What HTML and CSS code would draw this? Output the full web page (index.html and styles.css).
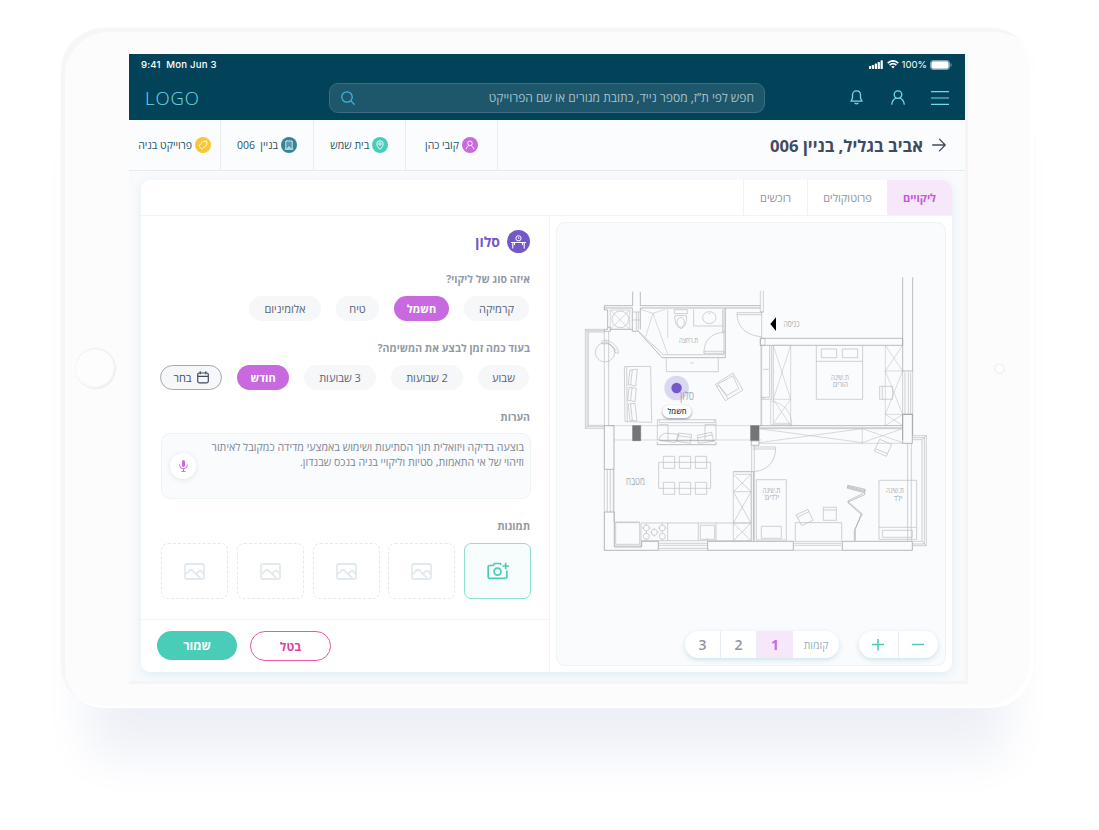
FILE: index.html
```html
<!DOCTYPE html>
<html lang="he">
<head>
<meta charset="utf-8">
<title>אביב בגליל</title>
<link rel="stylesheet" href="styles.css">
</head>
<body>
<div class="device">
  <div class="home"></div>
  <div class="screen" dir="rtl">
    <header class="top">
      <div class="status" dir="ltr">
        <span class="clock">9:41&nbsp; Mon Jun 3</span>
        <span class="signals">
          <svg width="14" height="9" viewBox="0 0 14 9" fill="#fff"><rect x="0" y="6" width="2.200" height="3" rx=".6"/><rect x="2.900" y="5" width="2.200" height="4" rx=".6"/><rect x="5.800" y="3.600" width="2.200" height="5.400" rx=".6"/><rect x="8.700" y="2" width="2.200" height="7" rx=".6"/><rect x="11.600" y=".3" width="2.200" height="8.700" rx=".6"/></svg>
          <svg width="12" height="9" viewBox="0 0 12 9" fill="none" stroke="#fff" stroke-width="1.600"><path d="M.7 3.200Q6-1.600 11.300 3.200M2.600 5.200Q6 2.100 9.400 5.200"/><path d="M4.200 6.600Q6 5.200 7.800 6.600L6 8.500Z" fill="#fff" stroke="none"/></svg>
          <span>100%</span>
          <svg width="22" height="10" viewBox="0 0 22 10"><rect x=".5" y=".5" width="19" height="9" rx="2.400" fill="none" stroke="#7f9fab"/><rect x="1.300" y="1.300" width="17.400" height="7.400" rx="1.600" fill="#fff"/><path d="M21 3.500v3" stroke="#7f9fab"/></svg>
        </span>
      </div>
      <div class="bar">
        <svg class="menu" width="18" height="14" viewBox="0 0 18 14" stroke="#70dbe5" stroke-width="1.200"><path d="M0 .6h18M0 7h18M0 13.400h18"/></svg>
        <svg class="user" width="14" height="15" viewBox="0 0 14 15" fill="none" stroke="#70dbe5" stroke-width="1.300" stroke-linecap="round"><circle cx="7" cy="4.600" r="3.800"/><path d="M.8 14.200C1 10.600 3.300 8.900 5 8M13.200 14.200C13 10.600 10.700 8.900 9 8"/></svg>
        <svg class="bell" width="13" height="15" viewBox="0 0 13 15" fill="none" stroke="#70dbe5" stroke-width="1.300" stroke-linecap="round" stroke-linejoin="round"><path d="M6.500.9C4.100.9 2.500 2.700 2.500 5V8.200L1 11.200H12L10.500 8.200V5C10.500 2.700 8.900.9 6.500.9ZM5 13.300Q6.500 14.500 8 13.300"/></svg>
        <div class="search">
          <span>חפש לפי ת”ז, מספר נייד, כתובת מגורים או שם הפרוייקט</span>
          <svg width="14" height="14" viewBox="0 0 14 14" fill="none" stroke="#43b2dc" stroke-width="1.300" stroke-linecap="round"><circle cx="6" cy="6" r="5.200"/><path d="M9.900 9.900L13.200 13.200"/></svg>
        </div>
        <div class="logo">LOGO</div>
      </div>
    </header>
    <div class="crumbs">
      <div class="title">
        <svg width="14" height="14" viewBox="0 0 14 14" fill="none" stroke="#414b5e" stroke-width="1.300" stroke-linecap="round" stroke-linejoin="round"><path d="M.7 7H13M7.500 1.100L13.200 7L7.500 12.900"/></svg>
        <h1>אביב בגליל, בניין 006</h1>
      </div>
      <div class="crumb"><i class="dot purple"><svg width="10" height="10" viewBox="0 0 10 10"><circle cx="5" cy="3.300" r="2.300"/><path d="M1.200 9.300C1.400 7.300 2.600 6.300 3.900 5.500M8.800 9.300C8.600 7.300 7.400 6.300 6.100 5.500"/></svg></i><span>קובי כהן</span></div>
      <div class="crumb"><i class="dot green"><svg width="10" height="10" viewBox="0 0 10 10"><path d="M5 9.400C3 7.400 1.800 5.800 1.800 4A3.200 3.200 0 0 1 8.200 4C8.200 5.800 7 7.400 5 9.400Z"/><circle cx="5" cy="4" r="1.200"/></svg></i><span>בית שמש</span></div>
      <div class="crumb"><i class="dot teal"><svg width="10" height="10" viewBox="0 0 10 10"><path d="M.8 9.200H9.200M1.900 9V1H8.100V9M4 9V7H6V9M3.600 3H4.400M5.600 3H6.400M3.600 5H4.400M5.600 5H6.400"/></svg></i><span>בניין &nbsp;006</span></div>
      <div class="crumb"><i class="dot yellow"><svg width="10" height="10" viewBox="0 0 10 10"><path d="M5.200 1.500L8.900 1.100L8.700 4.900L4.400 8.800Q3.900 9.200 3.400 8.700L1.300 6.300Q.9 5.800 1.300 5.300ZM7 3V3.100"/></svg></i><span>פרוייקט בניה</span></div>
    </div>
    <main class="body">
      <section class="card">
        <nav class="tabs"><span class="tab on">ליקויים</span><span class="tab protocols">פרוטוקולים</span><span class="tab goods">רוכשים</span></nav>
        <div class="cols">
          <div class="mapcol">
            <div class="map">
              <svg class="plan" width="361" height="290" viewBox="575 270 361 290" fill="none" stroke="#b9bbbe" stroke-width="2">
                <!-- bathroom, balcony and living room -->
                <g transform="translate(575 270) scale(.3333)">
                  <path d="M173 65V107H88V120H98V178H88V184H106V172H98M196 65V107H556M196 114H556M88 114H172V178H106M172 178V184H190L261 263H451V114M196 114V178" stroke="#9b9da0"/>
                  <path d="M184 178L265 254H447V118M443 118V186H451M556 62V126M565 62V126M172 126H196M184 126V178M190 126V178M172 150H196"/>
                  <path d="M106 120H164V178H106ZM106 120L164 178M164 120L106 178" stroke-width="1.500"/><circle cx="136" cy="148" r="25"/>
                  <path d="M88 178H31V475H88M88 182H36V470H88M88 186H40V466H88M88 186V467M101 186V467M31 178L40 186M31 475L40 466"/>
                  <circle cx="90" cy="247" r="29"/><path d="M79 215C92 200 132 225 130 250L120 247C120 230 105 217 82 222ZM90 211L124 242"/>
                  <path d="M196 118L234 130L271 118M234 130L212 200M234 130L278 253M278 118V204" stroke-width="1.500"/>
                  <path d="M298 119H337V131H298ZM299 138Q318 134 335 138Q336 170 318 176Q299 170 299 138Z"/><ellipse cx="317" cy="157" rx="11" ry="15"/>
                  <path d="M356 118V168H443M403 128V133"/><ellipse cx="403" cy="143" rx="20" ry="18"/>
                  <path d="M387 248C387 210 410 189 446 187M387 244H447V250H387ZM486 128H560M486 134H560M486 128C486 172 515 197 560 200"/>
                  <path d="M274 265V305H430V265M345 277L350 281L356 277"/>
                  <path d="M148 290L227 289L230 457L150 455ZM155 290L157 455M165 300L187 298L182 348L160 344ZM172 299L167 345M162 352L184 355L180 395L158 391ZM171 353L167 392M160 402L180 400L186 452L165 452ZM167 401L172 452"/>
                  <path d="M421 343L474 309L504 360L451 392ZM425 350L432 346L459 386M428 343L474 317L491 356L456 376Z"/>
                  <path d="M106 467H560M118 510H560" stroke-width="1.500"/>
                  <path d="M247 512V449H423V512M279 510V464H251M390 510V464H422M253 449V458H418V449"/>
                  <path d="M256 498Q270 486 280 490L312 493Q308 512 300 518L252 510ZM310 489L350 494L346 520L304 514ZM308 497L348 502M367 496L410 487L416 514L370 520ZM368 504L411 495"/>
                  <path d="M556 205H570V226H556ZM560 126V205M560 226V467M560 384H570"/>
                  <path d="M173 467H197V512H173ZM527 467H552V512H527Z" fill="#747578" stroke="#747578"/>
                </g>
                <!-- parents' bedroom and entrance -->
                <g transform="translate(750 270) scale(.3333)">
                  <path d="M458 22V303H488V22M458 433V510M488 433V496M458 433H488M31 205H458V226H31V205M31 126H41" stroke="#9b9da0"/>
                  <path d="M458 303V433M465 307V433M475 307V433M482 307V433M488 303V433M33 226V467M59 226V382H33M65 226V388H33M70 226V388M40 298H56"/>
                  <path d="M70 226H122V467M70 388H122M70 388V460H122M70 226L122 388M122 226L70 388M70 388L122 467M122 388L70 460M62 392V464H126Q124 405 62 392M406 226V467M406 303H458M406 433H458M406 226L458 303M458 226L406 303L458 433M458 303L406 433L458 467M458 433L406 467" stroke-width="1.500"/>
                  <path d="M199 226V388H338V226M199 274H338M214 237H260V263H214ZM277 237H323V263H277ZM428 349H389V388H428ZM397 349V388"/>
                  <path d="M27 467H458M27 474H458" stroke="#9b9da0"/>
                  <path d="M61 162L78 142V183Z" fill="#000" stroke="none"/>
                </g>
                <!-- kitchen -->
                <g transform="translate(575 410) scale(.3333)">
                  <path d="M88 47H117V178H88ZM88 306V421H250V394H200V411H118V306H88M398 421V394H510M398 421H510" stroke="#929497"/>
                  <path d="M88 178V306M97 178V306M106 178V306M115 178V306M251 400H398M251 406H398M251 415H398M251 421H398M117 178V336H194M122 338H194V403H122ZM118 408H198V340"/>
                  <path d="M198 339H528M198 392H528M278 339V392M370 339V392M423 339V392M376 346H419V388H376ZM396 384V390"/>
                  <circle cx="214" cy="354" r="9"/><circle cx="262" cy="354" r="9"/><circle cx="238" cy="367" r="9"/><circle cx="214" cy="379" r="9"/><circle cx="262" cy="379" r="9"/>
                  <path d="M214 341V346M214 362V368M201 354H206M222 354H227M262 341V346M262 362V368M249 354H254M270 354H275M238 354V359M238 375V380M225 367H230M246 367H251M214 366V371M214 387V391M262 387V391"/>
                  <path d="M251 157H407V235H251ZM265 139H299V175H265ZM313 139H347V175H313ZM361 139H395V175H361ZM265 217H299V253H265ZM313 217H347V253H313ZM361 217H395V253H361Z"/>
                  <path d="M475 185V392M481 193H528V392M475 245H528M475 339H528M475 193L528 245M528 193L475 245L528 339M528 245L475 339L528 392M528 339L475 392" stroke-width="1.800"/>
                  <path d="M475 185H536V392M247 96V104H423V96M253 92H420M529 92H552V106H529Z" stroke="#9b9da0"/>
                </g>
                <!-- children's rooms -->
                <g transform="translate(745 410) scale(.3333)">
                  <path d="M473 13H502V100H473ZM0 394H145V421H0M292 394H502V421H292Z" stroke="#929497"/>
                  <path d="M42 56H473M42 100H473M352 56V98M42 56L352 98M42 98L352 56M352 56L473 98M352 98L473 56" stroke-width="1.600"/>
                  <path d="M20 106V392M28 106V392M24 111H92V117H24M92 117C90 155 70 180 28 185M34 209H124V390H34ZM49 349H109V385H49Z"/>
                  <path d="M145 394H292M148 400H289M148 406H289M145 421H292M151 392V338H290V392"/>
                  <path d="M153 315L189 298L204 331L170 347ZM157 322L192 305M235 292H274V331H235ZM235 300H274M404 88L440 103L424 139L388 123ZM391 116L428 131"/>
                  <path d="M402 211H515V388H402ZM402 352H515M412 361H502V382H412ZM488 100V392M499 100V392"/>
                  <path d="M502 77H544V407H502M502 83H538V402H502M502 89H531V394H502M531 89L544 77M531 394L544 407"/>
                  <path d="M308 226L361 238L359 248L307 235ZM309 229L360 242M308 232L359 245M359 248V254L310 276L352 312L328 360V392M355 250L309 273V278L348 313L331 359V392" stroke="#939598" stroke-width="1.600"/>
                </g>
                <g class="rooms" stroke="none" fill="#a9acb1">
                  <text x="688.500" y="342.500" font-size="8" textLength="19" lengthAdjust="spacingAndGlyphs">ת.רחצה</text><text x="791.500" y="327" font-size="9" textLength="16" lengthAdjust="spacingAndGlyphs">כניסה</text>
                  <text x="687" y="399.500" font-size="12" textLength="14" lengthAdjust="spacingAndGlyphs">סלון</text><text x="840" y="379.800" font-size="7.500" textLength="18" lengthAdjust="spacingAndGlyphs">ת.שינה</text><text x="840.500" y="387" font-size="7.500" textLength="15" lengthAdjust="spacingAndGlyphs">הורים</text>
                  <text x="635.500" y="485" font-size="11" textLength="19" lengthAdjust="spacingAndGlyphs">מטבח</text><text x="771.500" y="492.800" font-size="7.500" textLength="18" lengthAdjust="spacingAndGlyphs">ת.שינה</text><text x="772" y="500" font-size="7.500" textLength="14" lengthAdjust="spacingAndGlyphs">ילדים</text>
                  <text x="895" y="493.400" font-size="7.500" textLength="18" lengthAdjust="spacingAndGlyphs">ת.שינה</text><text x="898" y="500.600" font-size="7.500" textLength="9" lengthAdjust="spacingAndGlyphs">ילד</text>
                </g>
                <g class="pin" stroke="none"><circle cx="676.600" cy="388" r="12.300" fill="#7457c9" fill-opacity=".22"/><circle cx="676.600" cy="388" r="5.200" fill="#7457c9"/><rect class="tip" x="662.500" y="405" width="29" height="13" rx="6.500" fill="#fff"/><text x="677" y="414.300" font-size="8" font-weight="600" textLength="19" lengthAdjust="spacingAndGlyphs" fill="#343f5a">חשמל</text></g>
              </svg>
              <div class="controls">
                <div class="pill zoom"><span><svg width="12" height="12" viewBox="0 0 12 12" stroke="#4acdb8" stroke-width="1.600"><path d="M0 5.500H12"/></svg></span><span><svg width="12" height="12" viewBox="0 0 12 12" stroke="#4acdb8" stroke-width="1.600"><path d="M0 5.500H12M6-.5V11.500"/></svg></span></div>
                <div class="pill floors"><span class="cap">קומות</span><span class="on">1</span><span>2</span><span>3</span></div>
              </div>
            </div>
          </div>
          <div class="formcol">
            <div class="form">
              <div class="room"><i><svg width="15" height="14" viewBox="0 0 15 14" fill="none" stroke="#fff"><circle cx="7.500" cy="3.300" r="2.600"/><path d="M7.500 2V3.500L8.500 3.300" stroke-width=".7"/><path d="M0 7.500H15M1.800 7.500V13.500M13.200 7.500V13.500M3.500 8V10M11.500 8V10" stroke-width="1.100"/></svg></i><h2>סלון</h2></div>
              <h3>איזה סוג של ליקוי?</h3>
              <div class="chips kinds"><span class="w65">קרמיקה</span><span class="w55 on">חשמל</span><span class="w42">טיח</span><span class="w71">אלומיניום</span></div>
              <h3>בעוד כמה זמן לבצע את המשימה?</h3>
              <div class="chips"><span class="w50">שבוע</span><span class="w71">2 שבועות</span><span class="w71">3 שבועות</span><span class="w51 on">חודש</span><span class="w62 pick"><svg width="12" height="13" viewBox="0 0 12 13" fill="none" stroke="#414b5e" stroke-width="1.200"><rect x=".7" y="2" width="10.600" height="9.800" rx="1.500"/><path d="M1 5.300H11M3.200.3V3.300M8.800.3V3.300"/></svg>בחר</span></div>
              <h3>הערות</h3>
              <div class="notes"><p>בוצעה בדיקה ויזואלית תוך הסתיעות ושימוש באמצעי מדידה כמקובל לאיתור<br>וזיהוי של אי התאמות, סטיות וליקויי בניה בנכס שבנדון.</p><i class="mic"><svg width="9" height="12" viewBox="0 0 9 12" fill="none" stroke="#c969df"><rect x="3" y="0" width="3" height="7" rx="1.500" fill="#c969df" stroke="none"/><path d="M.6 4.500V5.200A3.900 3.500 0 0 0 8.400 5.200V4.500M4.500 8.700V11.300M2.500 11.400H6.500"/></svg></i></div>
              <h3>תמונות</h3>
              <div class="tiles">
                <span class="tile add"><svg width="22" height="18" viewBox="0 0 22 18" fill="none" stroke="#4acdb8" stroke-width="1.700"><path d="M14 2.800L13.300 1.500H7.500L6 3.500H2.500Q1.200 3.500 1.200 4.800V15Q1.200 16.300 2.500 16.300H18.500Q19.800 16.300 19.800 15V8.500M18.700.7V7.300M15.400 4H22"/><circle cx="10.500" cy="9.600" r="3.500"/></svg></span>
                <span class="tile"><svg width="21" height="17" viewBox="0 0 21 17" fill="none" stroke="#e2eaef" stroke-width="1.800"><rect x="1" y="1" width="19" height="15" rx="1.500"/><path d="M1.500 11.500L5.500 7.300Q7 6 8.500 7.500L17 15.800M12.500 11.500C13 8 16.500 7 18 9L20 11.500"/></svg></span>
                <span class="tile"><svg width="21" height="17" viewBox="0 0 21 17" fill="none" stroke="#e2eaef" stroke-width="1.800"><rect x="1" y="1" width="19" height="15" rx="1.500"/><path d="M1.500 11.500L5.500 7.300Q7 6 8.500 7.500L17 15.800M12.500 11.500C13 8 16.500 7 18 9L20 11.500"/></svg></span>
                <span class="tile"><svg width="21" height="17" viewBox="0 0 21 17" fill="none" stroke="#e2eaef" stroke-width="1.800"><rect x="1" y="1" width="19" height="15" rx="1.500"/><path d="M1.500 11.500L5.500 7.300Q7 6 8.500 7.500L17 15.800M12.500 11.500C13 8 16.500 7 18 9L20 11.500"/></svg></span>
                <span class="tile"><svg width="21" height="17" viewBox="0 0 21 17" fill="none" stroke="#e2eaef" stroke-width="1.800"><rect x="1" y="1" width="19" height="15" rx="1.500"/><path d="M1.500 11.500L5.500 7.300Q7 6 8.500 7.500L17 15.800M12.500 11.500C13 8 16.500 7 18 9L20 11.500"/></svg></span>
              </div>
            </div>
            <footer class="actions"><button class="cancel">בטל</button><button class="save">שמור</button></footer>
          </div>
        </div>
      </section>
    </main>
  </div>
  <div class="camera"></div>
</div>
</body>
</html>
```
FILE: styles.css
```css
* { box-sizing: border-box; }
body { margin: 0; width: 1099px; height: 830px; overflow: hidden; background: #fff; padding: 28px 0 0 61px; font-family: "Open Sans", "Noto Sans", sans-serif; font-size: 11px; color: #414b5e; }
svg { display: block; flex: none; }
h1, h2, h3, p { margin: 0; }
i { font-style: normal; }
.device { width: 973px; height: 680px; border-radius: 44px; background: #fcfcfc; display: grid; grid-template-columns: 68px 839px 66px; grid-template-rows: 630px; padding-top: 26px; justify-items: center; align-items: center; box-shadow: inset 4px 4px 0 #f6f6f6, inset -4px -3px 0 #fff, 0 0 2px #f4f4f6, 0 75px 50px -27px #eef0f7; }
.home { width: 41px; height: 41px; border-radius: 50%; background: #fdfdfd; box-shadow: inset -1px -1px 3px #e6e6e6, inset 0 1px 1px #f0f0f0; margin-top: -1px; }
.camera { width: 11px; height: 11px; border-radius: 50%; border: 2px solid #f3f3f3; background: #fff; margin: -1px 3px 0 0; }
.screen { width: 839px; height: 630px; border-right: 3px solid #f5f5f5; border-bottom: 3px solid #f5f5f5; background: #f8fafc; display: flex; flex-direction: column; }
.top { height: 66px; background: #03435a; }
.status { height: 20px; display: flex; justify-content: space-between; align-items: center; padding: 1px 13px 0 12px; color: #fff; font: 500 9.600px/12px Inter, sans-serif; letter-spacing: .2px; }
.signals { display: flex; align-items: center; gap: 4px; letter-spacing: 0; }
.signals span { margin: 0 -1px; font-weight: 400; }
.bar { height: 47px; display: flex; align-items: center; padding: 0 16px; }
.user { margin-right: 26px; }
.bell { margin-right: 28px; }
.search { width: 436px; height: 30px; margin-right: 85px; border: 1px solid #3b6c80; border-radius: 9px; background: #1e566b; display: flex; align-items: center; justify-content: space-between; padding: 0 10px 0 11px; color: #a7c2cc; font-size: 12px; }
.logo { margin-right: auto; direction: ltr; font-size: 18.500px; font-weight: 300; color: #70dbe5; letter-spacing: .9px; }
.crumbs { height: 51px; display: flex; background: #fbfcfe; border-bottom: 1px solid #e4eced; }
.title { flex: 1; display: flex; align-items: center; gap: 9px; padding-right: 19px; }
h1 { font-size: 16.700px; font-weight: 700; }
.crumb { width: 92.300px; border-right: 1px solid #e6edf0; display: flex; align-items: center; justify-content: center; gap: 3px; color: #1f5368; white-space: nowrap; font-size: 10.500px; }
.dot { width: 16px; height: 16px; border-radius: 50%; display: grid; place-items: center; }
.dot svg { fill: none; stroke: #fff; stroke-width: .9; }
.purple { background: #c969df; } .green { background: #4acdb8; } .teal { background: #33839a; } .yellow { background: #f7c737; }
.body { padding: 9px 13px 0 12px; }
.card { height: 492px; border-radius: 9px; background: #fff; box-shadow: 0 3px 8px #e0eef5; }
.tabs { height: 36px; display: flex; border-bottom: 1px solid #f1f4f5; color: #8d95a0; }
.tab { display: grid; place-items: center; border-left: 1px solid #edf2f4; }
.tabs .on { width: 65px; background: #f6e8fa; color: #c557dc; font-weight: 700; border-radius: 0 9px 0 0; border-left: 0; }
.protocols { width: 80px; } .goods { width: 64px; }
.cols { display: flex; height: 456px; }
.mapcol { width: 402px; padding: 6px; }
.map { height: 444px; border: 1px solid #eef3f4; border-radius: 9px; background: #f9fbfd; padding: 47px 9px 0 18px; }
.plan { direction: rtl; }
.rooms, .pin { text-anchor: middle; font-family: "Open Sans", sans-serif; }
.tip { filter: drop-shadow(0 1px 1px #8a93a5); }
.controls { display: flex; gap: 20px; margin: 71px -2px 0 0; }
.pill { height: 27px; display: flex; border-radius: 14px; background: #fff; box-shadow: 0 2px 5px #cfe3ec; overflow: hidden; }
.pill span { width: 36px; display: grid; place-items: center; border-right: 1px solid #e8eff2; font-size: 14px; font-weight: 600; color: #8d95a0; }
.pill span:first-child { border-right: 0; }
.pill.zoom span { width: 39.500px; }
.pill .cap { width: 46px; font-size: 10.500px; font-weight: 400; color: #9aafba; }
.pill .on { background: #f6e8fa; color: #c969df; font-weight: 700; border: 0; }
.formcol { width: 409px; border-right: 1px solid #f1f4f5; }
.form { height: 403px; padding: 14px 19px 0 20px; }
.room { height: 23px; display: flex; align-items: center; gap: 7px; color: #7457c9; }
.room i { width: 23px; height: 23px; border-radius: 50%; background: #7457c9; display: grid; place-items: center; }
h2 { font-size: 14px; margin-top: -1px; }
h3 { height: 16px; line-height: 16px; font-size: 10.500px; font-weight: 700; color: #929aa5; margin: 19px 0 9px; }
.room + h3 { margin-top: 18px; }
.chips { height: 25px; display: flex; gap: 15px; padding-right: 1px; margin-left: -1px; }
.chips span { flex: none; border-radius: 13px; background: #f5f7f9; display: flex; align-items: center; justify-content: center; gap: 6px; white-space: nowrap; color: #596476; }
.chips .on { background: #c969df; color: #fff; font-weight: 700; }
.chips .pick { border: 1px solid #a3a8b1; color: #414b5e; gap: 5px; }
.w65 { width: 65px; } .w55 { width: 55px; } .w42 { width: 43px; } .w71 { width: 72px; } .w50 { width: 51px; } .w51 { width: 52px; } .w62 { width: 62px; }
.notes { height: 66px; margin: -1px -1px 0 0; border: 1px solid #eef3f4; border-radius: 9px; background: #f9fbfd; display: flex; justify-content: space-between; padding: 6px 6px 0 8px; color: #7f8793; font-size: 10.650px; }
.notes p { line-height: 15px; white-space: nowrap; }
.mic { width: 26px; height: 26px; flex: none; margin-top: 13px; border-radius: 50%; background: #fff; box-shadow: 0 1px 5px #dbe7ee; display: grid; place-items: center; }
.tiles { display: flex; justify-content: space-between; margin: 0 -1px 0 0; }
.tile { width: 67px; height: 56px; border: 1px dashed #e2eaef; border-radius: 7px; display: grid; place-items: center; }
.add { border: 1px solid #8fe0d2; background: #f7fcfc; }
.actions { height: 53px; border-top: 1px solid #f1f4f5; display: flex; justify-content: flex-end; gap: 13px; padding: 11px 0 0 16px; }
button { width: 81px; height: 30px; border-radius: 15px; font: 700 12px "Open Sans", sans-serif; padding: 0; }
.save { width: 80px; height: 29px; border: 0; background: #4acdb8; color: #fff; }
.cancel { border: 1px solid #e957a8; background: #fff; color: #e044a0; }
```
